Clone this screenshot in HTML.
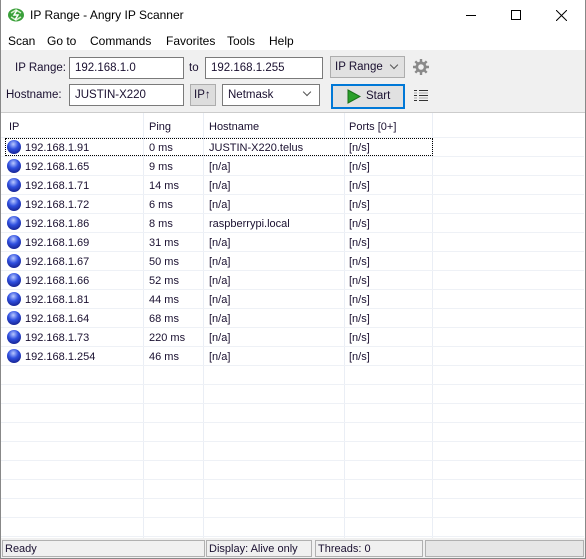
<!DOCTYPE html><html><head><style>
*{box-sizing:border-box;margin:0;padding:0}
body{width:586px;height:559px;position:relative;background:#fff;font-family:"Liberation Sans",sans-serif;font-size:12px;color:#1a1030;overflow:hidden}
.a{position:absolute}
.win{position:absolute;left:0;top:0;width:586px;height:559px;border:1px solid #888;border-top:none}
.inp{position:absolute;background:#fff;border:1px solid #7a7a7a;height:22px;padding:4px 5px;white-space:nowrap;font-size:11.5px}
.cb{position:absolute;background:#e1e1e1;border:1px solid #adadad;height:22px;padding:4px 4px;font-size:11.5px}
.vl{position:absolute;top:113px;height:425px;width:1px;background:#eaeef5}
.hl{position:absolute;left:1px;width:583px;height:1px;background:#eef1f6}
.ball{position:absolute;left:7px;width:14px;height:14px;border-radius:50%;background:radial-gradient(circle at 45% 30%,#b8c8ff 0,#3050e0 40%,#101880 90%)}
.c{position:absolute;white-space:nowrap;font-size:11px;margin-top:1px}
.m{position:absolute;white-space:nowrap;color:#000}
.t{position:absolute;white-space:nowrap;font-size:11.5px}
.chev{position:absolute;width:6px;height:6px;border-right:1px solid #555;border-bottom:1px solid #555;transform:rotate(45deg)}
.sb{position:absolute;top:540px;height:17px;border:1px solid #b0b0b0;padding:2px 2px;font-size:11px;white-space:nowrap}
</style></head><body>
<div class="win"></div>
<svg class="a" style="left:7px;top:7px" width="18" height="16" viewBox="0 0 18 16"><ellipse cx="9" cy="8" rx="8" ry="6.5" fill="#3aa03a"/><path d="M4 6 L9 3 L14 6 M4 10 L9 13 L14 10" stroke="#d8f0d0" stroke-width="1.5" fill="none"/><path d="M10 3 L7 8 H11 L8 13" stroke="#fff" stroke-width="1.5" fill="none"/></svg>
<div class="m" style="left:30px;top:8px">IP Range - Angry IP Scanner</div>
<div class="a" style="left:466px;top:15px;width:10px;height:1px;background:#000"></div>
<div class="a" style="left:511px;top:10px;width:10px;height:10px;border:1px solid #000"></div>
<svg class="a" style="left:556px;top:10px" width="11" height="11"><path d="M0 0L11 11M11 0L0 11" stroke="#000"/></svg>
<div class="m" style="left:8px;top:34px">Scan</div>
<div class="m" style="left:47px;top:34px">Go to</div>
<div class="m" style="left:90px;top:34px">Commands</div>
<div class="m" style="left:166px;top:34px">Favorites</div>
<div class="m" style="left:227px;top:34px">Tools</div>
<div class="m" style="left:269px;top:34px">Help</div>
<div class="a" style="left:1px;top:50px;width:584px;height:63px;background:#f0f0f0"></div>
<div class="t" style="left:15px;top:62px">IP Range:</div>
<div class="inp" style="left:69px;top:57px;width:115px">192.168.1.0</div>
<div class="t" style="left:189px;top:62px">to</div>
<div class="inp" style="left:205px;top:57px;width:118px">192.168.1.255</div>
<div class="cb" style="left:330px;top:56px;width:75px">IP Range</div><div class="chev" style="left:391px;top:62px"></div>
<svg class="a" style="left:412px;top:58px" width="18" height="18" viewBox="0 0 18 18"><g stroke="#8a8a8a" stroke-width="2.4"><path d="M9 1V17M1 9H17M3.3 3.3L14.7 14.7M14.7 3.3L3.3 14.7"/></g><circle cx="9" cy="9" r="5.5" fill="#8a8a8a"/><circle cx="9" cy="9" r="2.8" fill="#f0f0f0"/></svg>
<div class="t" style="left:6px;top:89px">Hostname:</div>
<div class="inp" style="left:69px;top:84px;width:115px">JUSTIN-X220</div>
<div class="cb" style="left:190px;top:84px;width:26px;padding:4px 3px;background:#ddd">IP↑</div>
<div class="inp" style="left:222px;top:84px;width:98px">Netmask</div><div class="chev" style="left:304px;top:89px"></div>
<div class="a" style="left:331px;top:84px;width:74px;height:25px;border:2px solid #0078d7;background:#e1e1e1"></div>
<svg class="a" style="left:347px;top:89px" width="14" height="15"><path d="M1 1L13 7.5L1 14Z" fill="#2aa02a" stroke="#1a701a"/></svg>
<div class="t" style="left:366px;top:90px">Start</div>
<svg class="a" style="left:414px;top:90px" width="14" height="11"><g stroke="#333"><path d="M0 .5H3M5 .5H14M0 5.5H3M5 5.5H14M0 10.5H3M5 10.5H14"/><path d="M0 3H3M5 3H14M0 8H3M5 8H14" stroke="#aaa"/></g></svg>
<div class="a" style="left:1px;top:112px;width:584px;height:1px;background:#ccc"></div>
<div class="vl" style="left:143px"></div><div class="vl" style="left:203px"></div><div class="vl" style="left:344px"></div><div class="vl" style="left:432px"></div>
<div class="hl" style="top:137px"></div><div class="hl" style="top:156px"></div><div class="hl" style="top:175px"></div><div class="hl" style="top:194px"></div><div class="hl" style="top:213px"></div><div class="hl" style="top:232px"></div><div class="hl" style="top:251px"></div><div class="hl" style="top:270px"></div><div class="hl" style="top:289px"></div><div class="hl" style="top:308px"></div><div class="hl" style="top:327px"></div><div class="hl" style="top:346px"></div><div class="hl" style="top:365px"></div><div class="hl" style="top:384px"></div><div class="hl" style="top:403px"></div><div class="hl" style="top:422px"></div><div class="hl" style="top:441px"></div><div class="hl" style="top:460px"></div><div class="hl" style="top:479px"></div><div class="hl" style="top:498px"></div><div class="hl" style="top:517px"></div><div class="hl" style="top:536px"></div>
<div class="c" style="left:9px;top:120px">IP</div><div class="c" style="left:149px;top:120px">Ping</div><div class="c" style="left:209px;top:120px">Hostname</div><div class="c" style="left:349px;top:120px">Ports [0+]</div>
<div class="a" style="left:5px;top:138px;width:428px;height:18px;border:1px dotted #000"></div>
<div class="ball" style="top:140px"></div><div class="c" style="left:25px;top:141px">192.168.1.91</div><div class="c" style="left:149px;top:141px">0 ms</div><div class="c" style="left:209px;top:141px">JUSTIN-X220.telus</div><div class="c" style="left:349px;top:141px">[n/s]</div>
<div class="ball" style="top:159px"></div><div class="c" style="left:25px;top:160px">192.168.1.65</div><div class="c" style="left:149px;top:160px">9 ms</div><div class="c" style="left:209px;top:160px">[n/a]</div><div class="c" style="left:349px;top:160px">[n/s]</div>
<div class="ball" style="top:178px"></div><div class="c" style="left:25px;top:179px">192.168.1.71</div><div class="c" style="left:149px;top:179px">14 ms</div><div class="c" style="left:209px;top:179px">[n/a]</div><div class="c" style="left:349px;top:179px">[n/s]</div>
<div class="ball" style="top:197px"></div><div class="c" style="left:25px;top:198px">192.168.1.72</div><div class="c" style="left:149px;top:198px">6 ms</div><div class="c" style="left:209px;top:198px">[n/a]</div><div class="c" style="left:349px;top:198px">[n/s]</div>
<div class="ball" style="top:216px"></div><div class="c" style="left:25px;top:217px">192.168.1.86</div><div class="c" style="left:149px;top:217px">8 ms</div><div class="c" style="left:209px;top:217px">raspberrypi.local</div><div class="c" style="left:349px;top:217px">[n/s]</div>
<div class="ball" style="top:235px"></div><div class="c" style="left:25px;top:236px">192.168.1.69</div><div class="c" style="left:149px;top:236px">31 ms</div><div class="c" style="left:209px;top:236px">[n/a]</div><div class="c" style="left:349px;top:236px">[n/s]</div>
<div class="ball" style="top:254px"></div><div class="c" style="left:25px;top:255px">192.168.1.67</div><div class="c" style="left:149px;top:255px">50 ms</div><div class="c" style="left:209px;top:255px">[n/a]</div><div class="c" style="left:349px;top:255px">[n/s]</div>
<div class="ball" style="top:273px"></div><div class="c" style="left:25px;top:274px">192.168.1.66</div><div class="c" style="left:149px;top:274px">52 ms</div><div class="c" style="left:209px;top:274px">[n/a]</div><div class="c" style="left:349px;top:274px">[n/s]</div>
<div class="ball" style="top:292px"></div><div class="c" style="left:25px;top:293px">192.168.1.81</div><div class="c" style="left:149px;top:293px">44 ms</div><div class="c" style="left:209px;top:293px">[n/a]</div><div class="c" style="left:349px;top:293px">[n/s]</div>
<div class="ball" style="top:311px"></div><div class="c" style="left:25px;top:312px">192.168.1.64</div><div class="c" style="left:149px;top:312px">68 ms</div><div class="c" style="left:209px;top:312px">[n/a]</div><div class="c" style="left:349px;top:312px">[n/s]</div>
<div class="ball" style="top:330px"></div><div class="c" style="left:25px;top:331px">192.168.1.73</div><div class="c" style="left:149px;top:331px">220 ms</div><div class="c" style="left:209px;top:331px">[n/a]</div><div class="c" style="left:349px;top:331px">[n/s]</div>
<div class="ball" style="top:349px"></div><div class="c" style="left:25px;top:350px">192.168.1.254</div><div class="c" style="left:149px;top:350px">46 ms</div><div class="c" style="left:209px;top:350px">[n/a]</div><div class="c" style="left:349px;top:350px">[n/s]</div>
<div class="a" style="left:1px;top:538px;width:584px;height:20px;background:#f0f0f0"></div>
<div class="sb" style="left:2px;width:203px">Ready</div>
<div class="sb" style="left:206px;width:106px">Display: Alive only</div>
<div class="sb" style="left:315px;width:108px">Threads: 0</div>
<div class="sb" style="left:425px;width:159px;background:#e6e6e6"></div>
</body></html>
